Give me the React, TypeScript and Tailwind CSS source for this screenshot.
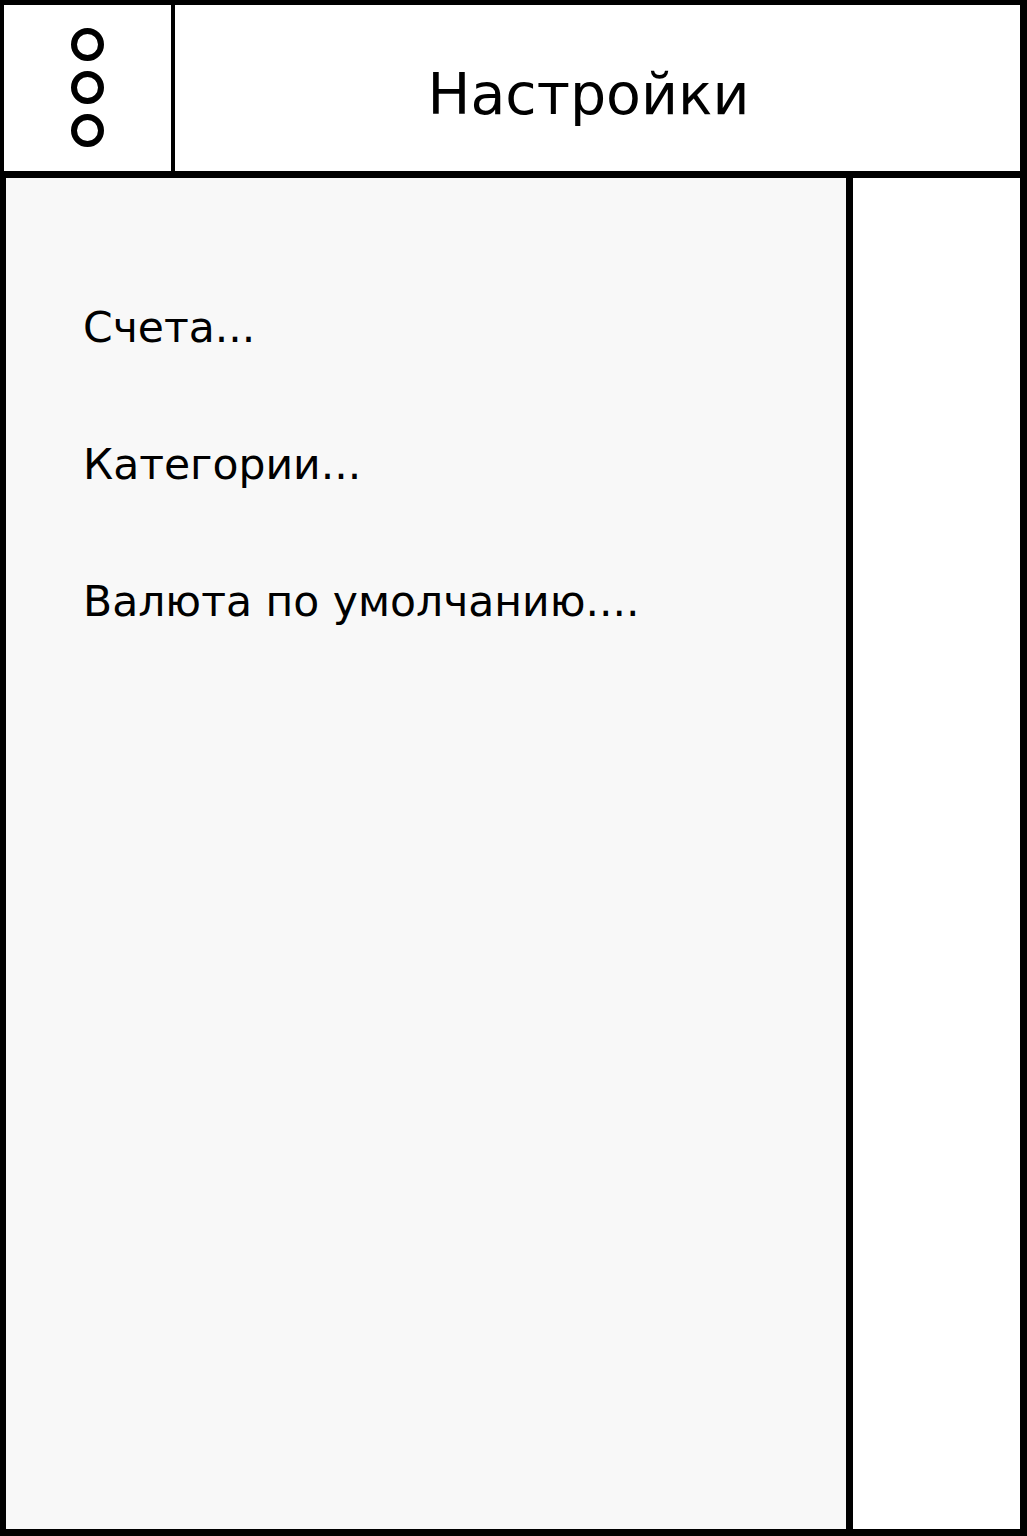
const FONT = { fontFamily: '"DejaVu Sans", Verdana, sans-serif' };

function Dots() {
  return (
    <div className="flex flex-col items-center gap-[10px]">
      <div className="h-[33px] w-[33px] rounded-full border-[6px] border-black" />
      <div className="h-[33px] w-[33px] rounded-full border-[6px] border-black" />
      <div className="h-[33px] w-[33px] rounded-full border-[6px] border-black" />
    </div>
  );
}

const ITEMS = ["Счета...", "Категории...", "Валюта по умолчанию...."];

export default function App() {
  return (
    <div className="flex h-[1536px] w-[1027px] flex-col bg-white text-black" style={FONT}>
      <header className="flex h-[178px] shrink-0 border-t-[5px] border-r-[7px] border-b-[7px] border-l-[4px] border-black">
        <div className="flex w-[171px] shrink-0 items-center justify-center border-r-4 border-black pb-[2px]">
          <Dots />
        </div>
        <div className="flex flex-1 items-center justify-center pt-[12px] pr-[18px]">
          <h1 className="text-[57px] leading-none font-normal">Настройки</h1>
        </div>
      </header>

      <div className="flex flex-1">
        <div className="flex w-[853px] shrink-0 flex-col gap-[89px] border-r-[7px] border-b-[7px] border-l-[6px] border-black bg-[#f8f8f8] pt-[126px] pl-[77px]">
          {ITEMS.map((item) => (
            <div key={item} className="text-[42.5px] leading-[48px]">
              {item}
            </div>
          ))}
        </div>
        <div className="flex-1 border-r-[7px] border-b-[7px] border-black bg-white" />
      </div>
    </div>
  );
}
